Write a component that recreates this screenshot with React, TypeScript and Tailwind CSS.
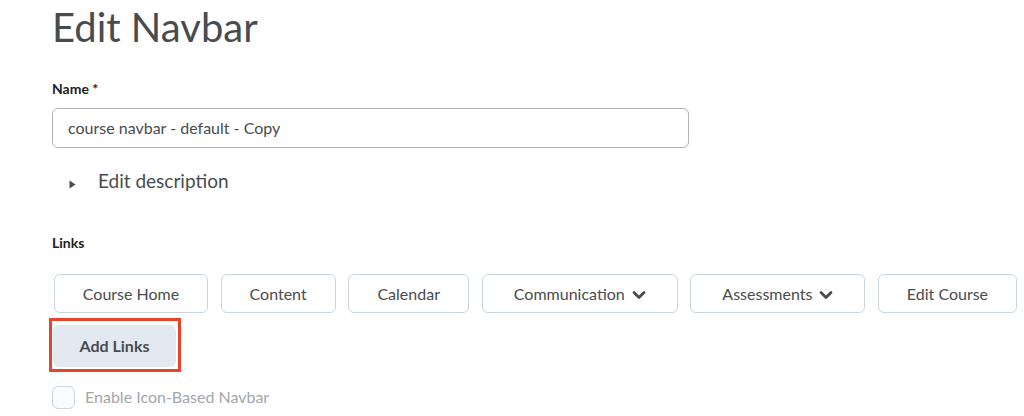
import React from "react";

const Chevron = () => (
  <svg width="14" height="10" viewBox="0 0 14 10" className="ml-[7px] mt-[2px]">
    <path d="M2 2.5 L7 7.5 L12 2.5" fill="none" stroke="#494c4e" strokeWidth="2.8" strokeLinecap="round" strokeLinejoin="round" />
  </svg>
);

const links: { label: string; w: string; chevron?: boolean }[] = [
  { label: "Course Home", w: "w-[154px]" },
  { label: "Content", w: "w-[115px]" },
  { label: "Calendar", w: "w-[121px]" },
  { label: "Communication", w: "w-[196px]", chevron: true },
  { label: "Assessments", w: "w-[175px]", chevron: true },
  { label: "Edit Course", w: "w-[139px]" },
];

export default function App() {
  return (
    <div className="w-[1024px] h-[416px] overflow-hidden bg-white pl-[52px] font-['Lato','Noto_Sans',sans-serif] text-[#494c4e]">
      <h1 className="pt-[2px] text-[40px] leading-[50px] font-normal text-[#494c4e]">Edit Navbar</h1>
      <div className="mt-[27px] text-[14px] leading-[20px] font-bold text-[#202122]">Name *</div>
      <div className="mt-[9px] w-[637px] h-[40px] rounded-[6px] border border-[#b1b4b6] flex items-center pl-[15px] text-[16px] text-[#494c4e]">
        course navbar - default - Copy
      </div>
      <div className="mt-[21px] h-[24px] flex items-center">
        <svg width="7" height="9" viewBox="0 0 7 9" className="ml-[17px] mt-[6px]">
          <path d="M0.5 0.5 L6.5 4.5 L0.5 8.5 Z" fill="#494c4e" />
        </svg>
        <span className="ml-[22px] text-[19px] leading-[24px] text-[#494c4e]">Edit description</span>
      </div>
      <div className="mt-[40px] text-[14px] leading-[20px] font-bold text-[#202122]">Links</div>
      <div className="mt-[21px] ml-[2px] flex gap-[12.6px]">
        {links.map((l) => (
          <div
            key={l.label}
            className={`${l.w} h-[39px] shrink-0 rounded-[6px] border border-[#cdd5dc] bg-white flex items-center justify-center text-[16px] text-[#494c4e]`}
          >
            {l.label}
            {l.chevron && <Chevron />}
          </div>
        ))}
      </div>
      <div className="mt-[5px] ml-[-3px] w-[132px] h-[54px] border-[3px] border-[#e8432b] pl-[1px] pt-[4px]">
        <div className="w-[123px] h-[42px] rounded-[6px] bg-[#e3e9f1] flex items-center justify-center text-[16px] font-bold text-[#494c4e]">
          Add Links
        </div>
      </div>
      <div className="mt-[13px] flex items-center">
        <div className="w-[23px] h-[23px] rounded-[6px] border border-[#cdd5dc] bg-[#f9fbff]" />
        <span className="ml-[10px] text-[16px] text-[#a2a6a9]">Enable Icon-Based Navbar</span>
      </div>
    </div>
  );
}
